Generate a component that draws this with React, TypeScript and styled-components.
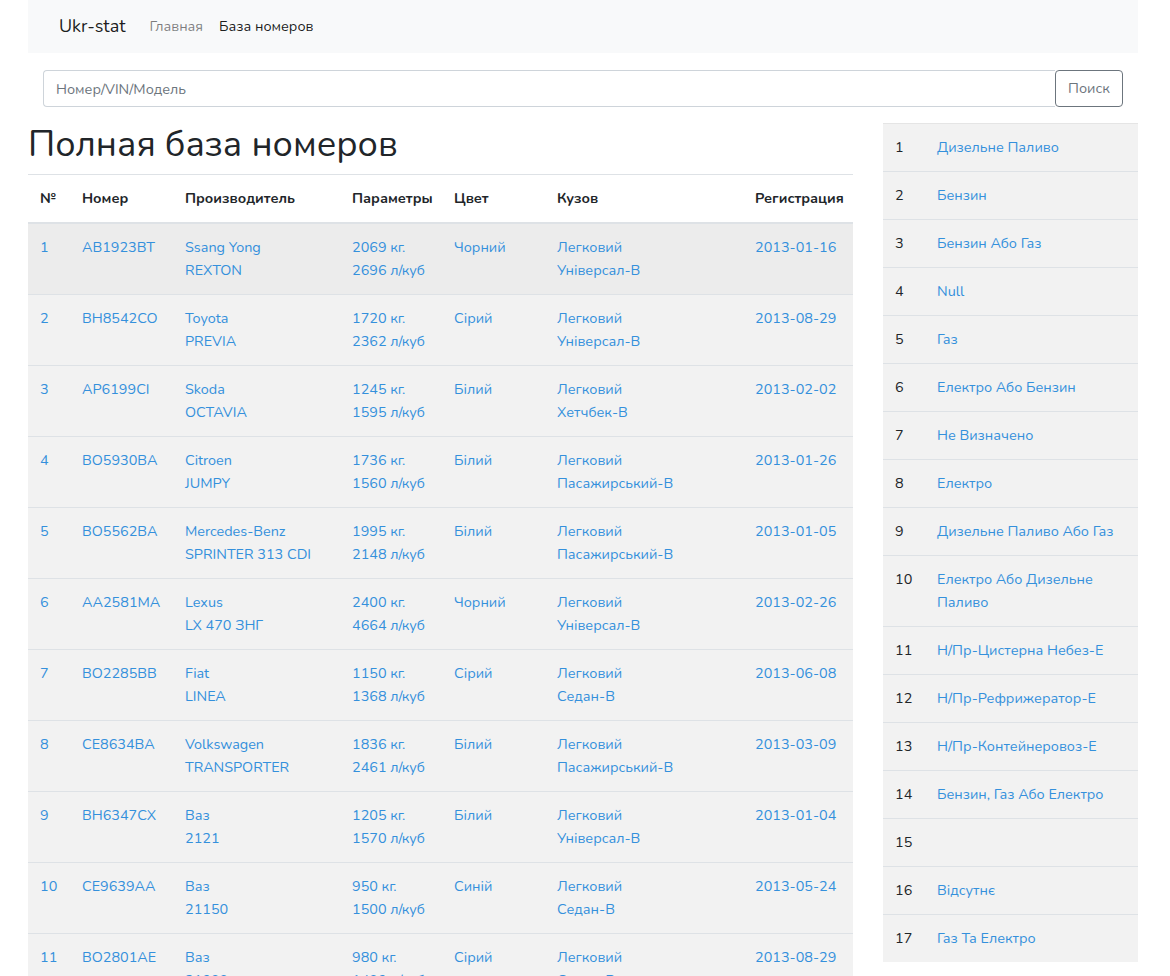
import React from "react";
import styled, {createGlobalStyle} from "styled-components";

const GlobalStyle = createGlobalStyle`
  body {
    margin: 0;
    background: #fff;
    color: #212529;
    font-family: "Nunito", "Noto Sans", "DejaVu Sans", sans-serif;
    font-size: 14.4px;
    line-height: 23px;
  }
  * { box-sizing: border-box; }
`

const Page = styled.div`
  width: 1110px;
  margin-left: 28px;
`
const Navbar = styled.nav`
  display: flex;
  align-items: center;
  height: 53px;
  padding: 0 31px;
  background-color: #f8f9fa;
`
const Brand = styled.span`
  font-size: 18px;
  color: rgba(0, 0, 0, .9);
  margin-right: 16px;
`
const NavLink = styled.a<{ $active?: boolean }>`
  padding: 0 8px;
  color: ${props => props.$active ? 'rgba(0, 0, 0, .9)' : 'rgba(0, 0, 0, .5)'};
  text-decoration: none;
`
const SearchForm = styled.form`
  display: flex;
  margin: 17px 15px 16px;
`
const SearchInput = styled.input`
  flex: 1;
  height: 37px;
  padding: 6px 12px;
  font: inherit;
  color: #495057;
  border: 1px solid #ced4da;
  border-radius: 4px 0 0 4px;
  border-right: none;
  &::placeholder { color: #6c757d; }
`
const SearchButton = styled.button`
  width: 68px;
  height: 37px;
  font: inherit;
  color: #6c757d;
  background: transparent;
  border: 1px solid #6c757d;
  border-radius: 4px;
`
const Row = styled.div`
  display: flex;
  gap: 30px;
  align-items: flex-start;
`
const Main = styled.div`
  width: 825px;
`
const Title = styled.h1`
  margin: 0 0 8px;
  font-size: 36px;
  font-weight: 400;
  line-height: 43px;
`
const Table = styled.table`
  width: 100%;
  border-collapse: collapse;
  table-layout: fixed;
`
const Th = styled.th`
  padding: 12px;
  text-align: left;
  font-weight: 700;
  border-top: 1px solid #dee2e6;
  border-bottom: 2px solid #dee2e6;
  vertical-align: bottom;
  white-space: nowrap;
`
const Tr = styled.tr<{ $hover?: boolean }>`
  background-color: ${props => props.$hover ? '#ececec' : '#f2f2f2'};
`
const Td = styled.td`
  padding: 12px;
  vertical-align: top;
  border-top: 1px solid #dee2e6;
  color: #3490dc;
  white-space: nowrap;
`
const Line = styled.div``
const Side = styled.ul`
  width: 255px;
  margin: 0;
  padding: 0;
  list-style: none;
  background-color: #f2f2f2;
  border-top: 1px solid #e5e5e5;
`
const SideItem = styled.li`
  display: flex;
  padding: 12px;
  border-bottom: 1px solid #dee2e6;
  &:last-child { border-bottom: none; }
`
const SideNum = styled.span`
  width: 42px;
  flex-shrink: 0;
`
const SideLink = styled.a`
  color: #3490dc;
  text-decoration: none;
`

const cols = [42, 103, 167, 102, 103, 198, 110]
const headers = ['№', 'Номер', 'Производитель', 'Параметры', 'Цвет', 'Кузов', 'Регистрация']

const cars = [
    ['AB1923BT', 'Ssang Yong', 'REXTON', '2069', '2696', 'Чорний', 'Універсал-В', '2013-01-16'],
    ['BH8542CO', 'Toyota', 'PREVIA', '1720', '2362', 'Сірий', 'Універсал-В', '2013-08-29'],
    ['AP6199CI', 'Skoda', 'OCTAVIA', '1245', '1595', 'Білий', 'Хетчбек-В', '2013-02-02'],
    ['BO5930BA', 'Citroen', 'JUMPY', '1736', '1560', 'Білий', 'Пасажирський-В', '2013-01-26'],
    ['BO5562BA', 'Mercedes-Benz', 'SPRINTER 313 CDI', '1995', '2148', 'Білий', 'Пасажирський-В', '2013-01-05'],
    ['AA2581MA', 'Lexus', 'LX 470 ЗНГ', '2400', '4664', 'Чорний', 'Універсал-В', '2013-02-26'],
    ['BO2285BB', 'Fiat', 'LINEA', '1150', '1368', 'Сірий', 'Седан-В', '2013-06-08'],
    ['CE8634BA', 'Volkswagen', 'TRANSPORTER', '1836', '2461', 'Білий', 'Пасажирський-В', '2013-03-09'],
    ['BH6347CX', 'Ваз', '2121', '1205', '1570', 'Білий', 'Універсал-В', '2013-01-04'],
    ['CE9639AA', 'Ваз', '21150', '950', '1500', 'Синій', 'Седан-В', '2013-05-24'],
    ['BO2801AE', 'Ваз', '21099', '980', '1490', 'Сірий', 'Седан-В', '2013-08-29'],
]

const fuels = [
    'Дизельне Паливо', 'Бензин', 'Бензин Або Газ', 'Null', 'Газ', 'Електро Або Бензин',
    'Не Визначено', 'Електро', 'Дизельне Паливо Або Газ', 'Електро Або Дизельне Паливо',
    'Н/Пр-Цистерна Небез-Е', 'Н/Пр-Рефрижератор-Е', 'Н/Пр-Контейнеровоз-Е',
    'Бензин, Газ Або Електро', '', 'Відсутнє', 'Газ Та Електро'
]

export default function App() {
    return (
        <>
            <GlobalStyle/>
            <Page>
                <Navbar>
                    <Brand>Ukr-stat</Brand>
                    <NavLink href="#">Главная</NavLink>
                    <NavLink href="#" $active>База номеров</NavLink>
                </Navbar>
                <SearchForm onSubmit={e => e.preventDefault()}>
                    <SearchInput placeholder="Номер/VIN/Модель"/>
                    <SearchButton type="submit">Поиск</SearchButton>
                </SearchForm>
                <Row>
                    <Main>
                        <Title>Полная база номеров</Title>
                        <Table>
                            <colgroup>
                                {cols.map((w, i) => <col key={i} style={{width: w}}/>)}
                            </colgroup>
                            <thead>
                            <tr>{headers.map(h => <Th key={h}>{h}</Th>)}</tr>
                            </thead>
                            <tbody>
                            {cars.map((c, idx) => (
                                <Tr key={c[0]} $hover={idx === 0}>
                                    <Td>{idx + 1}</Td>
                                    <Td>{c[0]}</Td>
                                    <Td><Line>{c[1]}</Line><Line>{c[2]}</Line></Td>
                                    <Td><Line>{c[3]} кг.</Line><Line>{c[4]} л/куб</Line></Td>
                                    <Td>{c[5]}</Td>
                                    <Td><Line>Легковий</Line><Line>{c[6]}</Line></Td>
                                    <Td>{c[7]}</Td>
                                </Tr>
                            ))}
                            </tbody>
                        </Table>
                    </Main>
                    <Side>
                        {fuels.map((f, idx) => (
                            <SideItem key={idx}>
                                <SideNum>{idx + 1}</SideNum>
                                <SideLink href="#">{f}</SideLink>
                            </SideItem>
                        ))}
                    </Side>
                </Row>
            </Page>
        </>
    )
}
